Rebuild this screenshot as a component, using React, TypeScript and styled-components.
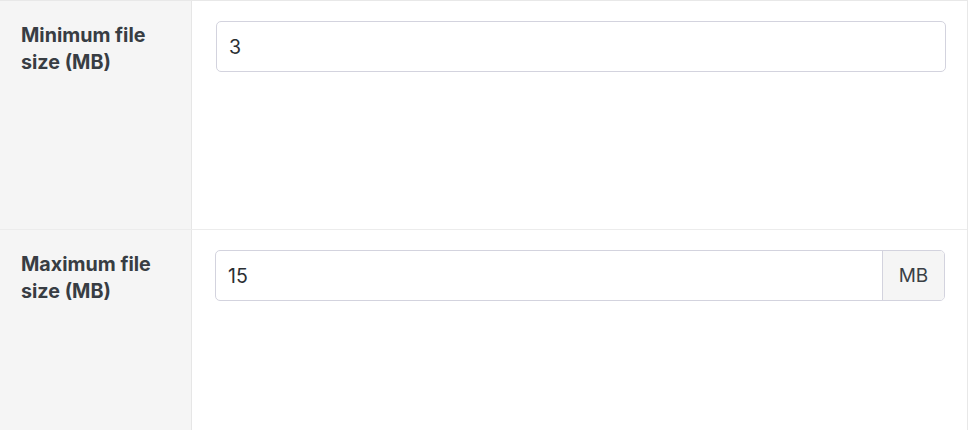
import React from "react";
import styled, { createGlobalStyle } from "styled-components";

const Global = createGlobalStyle`
  html, body { margin: 0; padding: 0; background: #ffffff; }
  body { font-family: Inter, "Liberation Sans", Arial, sans-serif; }
  * { box-sizing: border-box; }
`;

const Table = styled.div`
  width: 968px;
  border-top: 1px solid #e8e8e8;
  border-right: 1px solid #e8e8e8;
  display: flex;
  flex-direction: column;
`;

const Row = styled.div<{ $h: number }>`
  display: grid;
  grid-template-columns: 192px 1fr;
  height: ${(p) => p.$h}px;
  border-bottom: 1px solid #ececec;
`;

const LabelCell = styled.div`
  background: #f5f5f5;
  border-right: 1px solid #e6e6e6;
  padding: 21px 10px 0 21px;
  font-size: 19.7px;
  font-weight: 700;
  line-height: 27px;
  color: #383d43;
`;

const FieldCell = styled.div<{ $pl: number; $pr: number }>`
  padding: 20px ${(p) => p.$pr}px 0 ${(p) => p.$pl}px;
`;

const InputGroup = styled.div`
  display: flex;
  height: 51px;
  border: 1px solid #d3d3de;
  border-radius: 5px;
  overflow: hidden;
  background: #fff;
`;

const Input = styled.input`
  flex: 1;
  min-width: 0;
  border: none;
  outline: none;
  padding: 0 12px;
  font-family: Inter, "Liberation Sans", Arial, sans-serif;
  font-size: 19.5px;
  font-weight: 400;
  color: #2b2f33;
  background: transparent;
`;

const Addon = styled.div`
  width: 62px;
  display: flex;
  align-items: center;
  justify-content: center;
  background: #f5f5f5;
  border-left: 1px solid #d3d3de;
  font-size: 19px;
  color: #3a3f45;
`;

export default function App() {
  return (
    <>
      <Global />
      <Table>
        <Row $h={229}>
          <LabelCell>
            Minimum file
            <br />
            size (MB)
          </LabelCell>
          <FieldCell $pl={24} $pr={21}>
            <InputGroup>
              <Input defaultValue="3" />
            </InputGroup>
          </FieldCell>
        </Row>
        <Row $h={229}>
          <LabelCell>
            Maximum file
            <br />
            size (MB)
          </LabelCell>
          <FieldCell $pl={23} $pr={22}>
            <InputGroup>
              <Input defaultValue="15" />
              <Addon>MB</Addon>
            </InputGroup>
          </FieldCell>
        </Row>
      </Table>
    </>
  );
}
